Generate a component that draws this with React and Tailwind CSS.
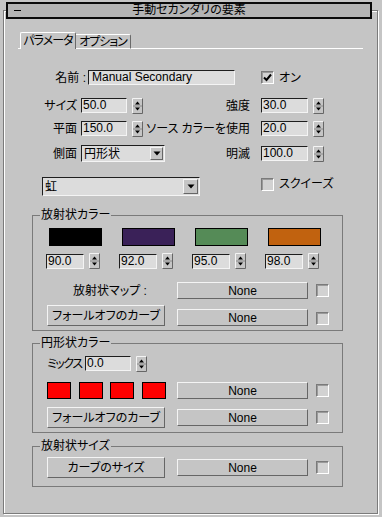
import React from "react";

const sunken =
  "border border-t-[#1e1e1e] border-l-[#1e1e1e] border-b-[#f4f4f4] border-r-[#f4f4f4]";
const raised =
  "border border-t-[#f4f4f4] border-l-[#f4f4f4] border-b-[#666666] border-r-[#666666]";

function SpinArrows() {
  return (
    <svg width="11" height="16" viewBox="0 0 11 16" className="block shrink-0">
      <rect x="0" y="0" width="11" height="16" fill="#c5c5c5" />
      <path d="M0.5 15.5V0.5H10.5" stroke="#f4f4f4" fill="none" />
      <path d="M0.5 15.5H10.5V0.5" stroke="#666666" fill="none" />
      <path d="M1 8H10" stroke="#8a8a8a" />
      <polygon points="3,6.5 8,6.5 5.5,3.5" fill="#000" />
      <polygon points="3,9.5 8,9.5 5.5,12.5" fill="#000" />
    </svg>
  );
}

function Field({ value, w }) {
  return (
    <div
      className={`${sunken} h-[15px] bg-[#dcdcdc] text-[12px] leading-[13px] pl-[1px] overflow-hidden whitespace-nowrap`}
      style={{ width: w }}
    >
      {value}
    </div>
  );
}

function Spinner({ value, w }) {
  return (
    <div className="flex items-center gap-[5px]">
      <Field value={value} w={w} />
      <SpinArrows />
    </div>
  );
}

function DropArrow({ size }) {
  return (
    <div
      className={`${raised} bg-[#c5c5c5] flex items-center justify-center shrink-0`}
      style={{ width: size, height: size }}
    >
      <svg width="8" height="5" viewBox="0 0 8 5">
        <polygon points="0.5,0.5 7.5,0.5 4,4.5" fill="#000" />
      </svg>
    </div>
  );
}

function Dropdown({ value, w, h }) {
  return (
    <div
      className={`${sunken} bg-[#dcdcdc] flex items-center justify-between pl-[2px] pr-[1px] text-[12px]`}
      style={{ width: w, height: h }}
    >
      <span>{value}</span>
      <DropArrow size={h - 4} />
    </div>
  );
}

function Check({ on }) {
  return (
    <div className="w-[13px] h-[13px] shrink-0 border border-t-[#7a7a7a] border-l-[#7a7a7a] border-b-white border-r-white bg-[#d2d2d2] shadow-[inset_1px_1px_0_#9a9a9a] flex items-center justify-center">
      {on && (
        <svg width="9" height="9" viewBox="0 0 9 9">
          <path d="M1 4.5L3.5 7L8 1.5" stroke="#000" strokeWidth="2" fill="none" />
        </svg>
      )}
    </div>
  );
}

function Btn({ label, w, h, className = "" }) {
  return (
    <div
      className={`${raised} bg-[#c5c5c5] shrink-0 flex items-center justify-center text-[12px] ${className}`}
      style={{ width: w, height: h }}
    >
      {label}
    </div>
  );
}

function NoneBtn({ className = "" }) {
  return (
    <Btn
      label={<span className="text-[12px]">None</span>}
      w={131}
      h={17}
      className={className}
    />
  );
}

function Group({ title, className, children }) {
  return (
    <fieldset className={`border border-[#7a7a7a] px-[7px] ml-[28px] w-[311px] ${className}`}>
      <legend className="px-[1px] text-[12px] leading-[14px]">{title}</legend>
      {children}
    </fieldset>
  );
}

export default function App() {
  const swatches = [
    { color: "bg-black", value: "90.0" },
    { color: "bg-[#3a2158]", value: "92.0" },
    { color: "bg-[#558b57]", value: "95.0" },
    { color: "bg-[#c1620f]", value: "98.0" },
  ];

  return (
    <div className="w-[382px] h-[517px] bg-[#c5c5c5] pt-[2px] overflow-hidden whitespace-nowrap text-black [font-family:'Liberation_Sans','Noto_Sans_CJK_JP',sans-serif] [font-feature-settings:'palt']">
      <div className="relative z-10 ml-[6px] w-[366px] h-[17px] bg-[#b4b4b4] border-2 border-[#0a0a0a] grid grid-cols-[1fr_auto_1fr] items-center text-[12px] leading-[13px]">
        <div className="ml-[6px] w-[7px] h-[1px] bg-black" />
        <div>手動セカンダリの要素</div>
        <div />
      </div>

      <div className="ml-[3px] mt-[-9px] w-[375px] h-[504px] border border-[#7b7b7b] shadow-[inset_1px_1px_0_#fff,1px_1px_0_#fff] flex flex-col text-[12px] leading-[14px]">
        <div className="mt-[21px] ml-[14px] w-[345px] h-[17px] flex items-end">
          <div className="w-[2px] h-full border-b border-white" />
          <div className="w-[56px] h-[17px] border-t border-l border-white border-r border-r-[#6a6a6a] rounded-t-[2px] flex items-center justify-center tracking-[-1px]">
            パラメータ
          </div>
          <div className="w-[55px] h-[15px] border-t border-white border-b border-r border-r-[#6a6a6a] rounded-tr-[2px] flex items-center justify-center tracking-[-1px]">
            オプション
          </div>
          <div className="flex-1 h-full border-b border-white" />
        </div>

        <div className="mt-[21px] h-[15px] flex items-center">
          <div className="w-[84px] text-right pr-[2px]">名前 :</div>
          <Field value={<span className="pl-[2px]">Manual Secondary</span>} w={147} />
          <div className="ml-[26px]">
            <Check on />
          </div>
          <div className="ml-[5px]">オン</div>
        </div>

        <div className="mt-[13px] h-[15px] flex items-center">
          <div className="w-[73px] text-right">サイズ</div>
          <div className="ml-[4px]">
            <Spinner value="50.0" w={46} />
          </div>
          <div className="w-[107px] text-right">強度</div>
          <div className="ml-[11px]">
            <Spinner value="30.0" w={47} />
          </div>
        </div>

        <div className="mt-[8px] h-[15px] flex items-center">
          <div className="w-[73px] text-right">平面</div>
          <div className="ml-[4px]">
            <Spinner value="150.0" w={46} />
          </div>
          <div className="w-[107px] text-right">ソース カラーを使用</div>
          <div className="ml-[11px]">
            <Spinner value="20.0" w={47} />
          </div>
        </div>

        <div className="mt-[9px] h-[17px] flex items-center">
          <div className="w-[73px] text-right">側面</div>
          <div className="ml-[4px]">
            <Dropdown value="円形状" w={84} h={17} />
          </div>
          <div className="w-[85px] text-right">明滅</div>
          <div className="ml-[11px]">
            <Spinner value="100.0" w={47} />
          </div>
        </div>

        <div className="mt-[15px] flex items-start">
          <div className="ml-[38px]">
            <Dropdown value="虹" w={158} h={19} />
          </div>
          <div className="ml-[61px] mt-[1px]">
            <Check />
          </div>
          <div className="ml-[5px]">スクイーズ</div>
        </div>

        <Group title="放射状カラー" className="mt-[12px] h-[123px]">
          <div className="mt-[6px] ml-[6px] flex gap-[16px]">
            {swatches.map((s) => (
              <div key={s.value} className="w-[57px] flex flex-col">
                <div className={`ml-[3px] w-[53px] h-[18px] border border-black ${s.color}`} />
                <div className="mt-[7px]">
                  <Spinner value={s.value} w={38} />
                </div>
              </div>
            ))}
          </div>
          <div className="mt-[13px] h-[17px] flex items-center">
            <div className="w-[137px] pl-[33px]">放射状マップ :</div>
            <NoneBtn />
            <div className="ml-[8px]">
              <Check />
            </div>
          </div>
          <div className="mt-[6px] flex items-end">
            <Btn label="フォールオフのカーブ" w={118} h={21} className="ml-[7px]" />
            <NoneBtn className="ml-[12px]" />
            <div className="ml-[8px] mb-[1px]">
              <Check />
            </div>
          </div>
        </Group>

        <Group title="円形状カラー" className="mt-[5px] h-[97px]">
          <div className="mt-[6px] h-[15px] flex items-center">
            <div className="ml-[7px] w-[38px] tracking-[-1.5px]">ミックス</div>
            <Spinner value="0.0" w={46} />
          </div>
          <div className="mt-[11px] h-[17px] flex items-center">
            <div className="ml-[7px] w-[24px] h-[17px] border border-black bg-[#ff0000]" />
            <div className="ml-[8px] w-[24px] h-[17px] border border-black bg-[#ff0000]" />
            <div className="ml-[7px] w-[24px] h-[17px] border border-black bg-[#ff0000]" />
            <div className="ml-[8px] w-[24px] h-[17px] border border-black bg-[#ff0000]" />
            <NoneBtn className="ml-[11px]" />
            <div className="ml-[8px]">
              <Check />
            </div>
          </div>
          <div className="mt-[8px] flex items-center">
            <Btn label="フォールオフのカーブ" w={118} h={21} className="ml-[7px]" />
            <NoneBtn className="ml-[12px]" />
            <div className="ml-[8px]">
              <Check />
            </div>
          </div>
        </Group>

        <Group title="放射状サイズ" className="mt-[6px] h-[48px]">
          <div className="mt-[4px] flex items-center">
            <Btn label="カーブのサイズ" w={118} h={21} className="ml-[7px]" />
            <NoneBtn className="ml-[12px]" />
            <div className="ml-[8px]">
              <Check />
            </div>
          </div>
        </Group>
      </div>
    </div>
  );
}
